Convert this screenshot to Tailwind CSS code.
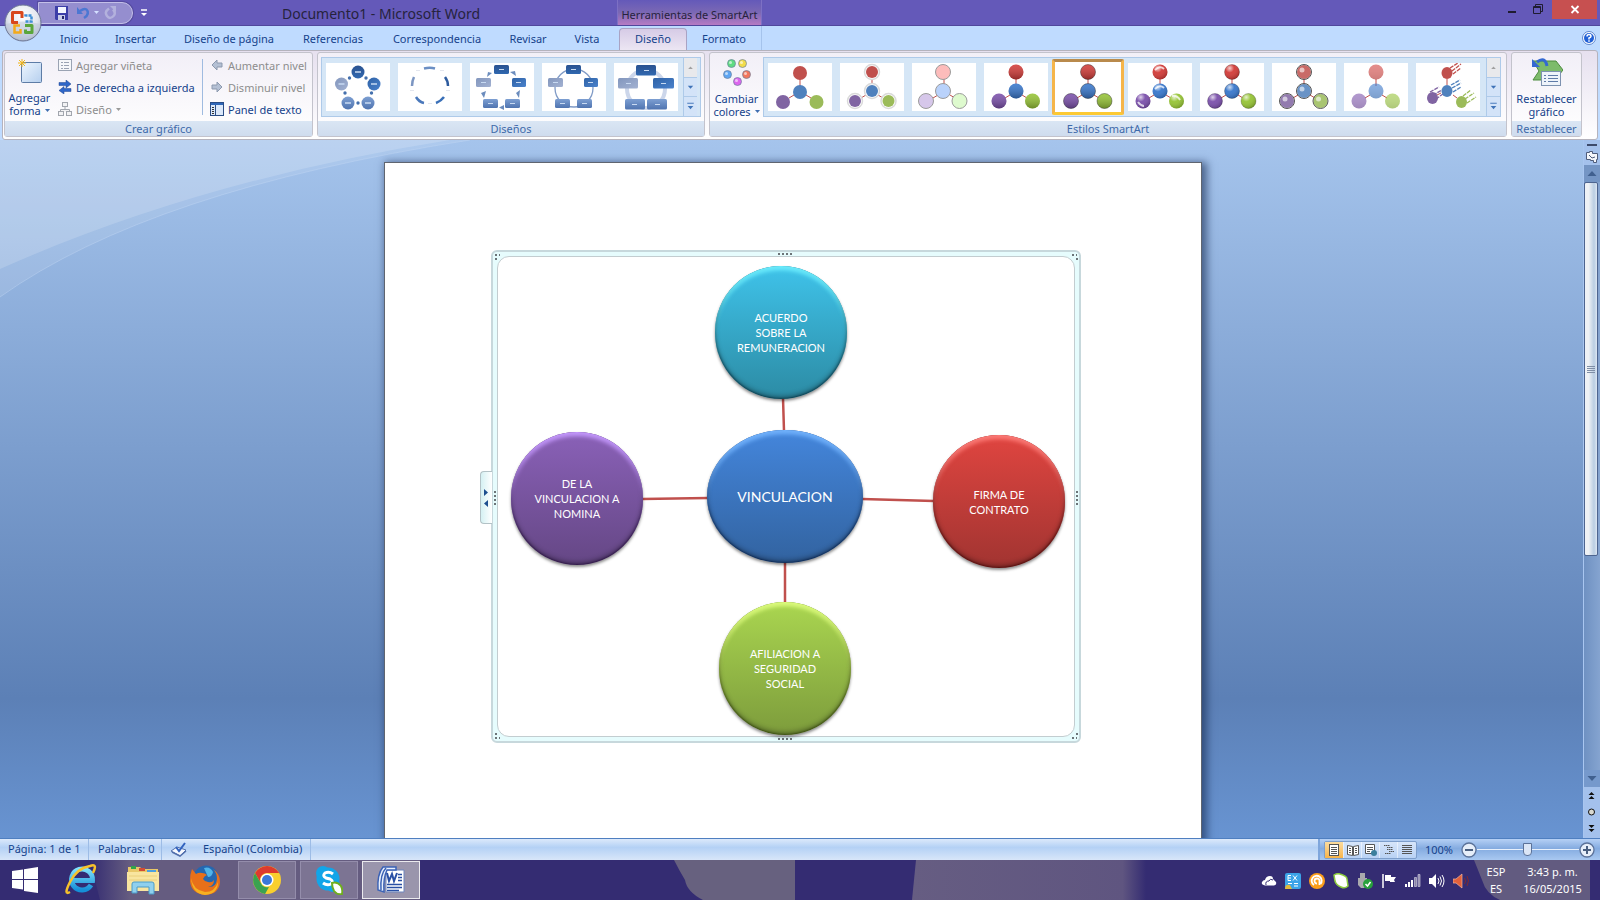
<!DOCTYPE html>
<html lang="es">
<head>
    <meta charset="UTF-8">
    <meta name="viewport" content="width=device-width, initial-scale=1.0">
    <title>Documento1 - Microsoft Word</title>
    <script src="https://cdn.jsdelivr.net/npm/@tailwindcss/browser@4"></script>
</head>
<body class="h-screen flex flex-col overflow-hidden bg-[#bfdbff] font-['Noto_Sans',sans-serif] text-[11px] leading-[13px] text-[#15428b]">

    <!-- Shared gradients and symbols -->
    <svg class="absolute w-0 h-0" aria-hidden="true">
        <defs>
            <linearGradient id="blueDark" x1="0" y1="0" x2="0" y2="1"><stop offset="0" stop-color="#2a5290"/><stop offset="1" stop-color="#3068b0"/></linearGradient>
            <linearGradient id="blueMid" x1="0" y1="0" x2="1" y2="1"><stop offset="0" stop-color="#2f62a6"/><stop offset="1" stop-color="#4a82cc"/></linearGradient>
            <linearGradient id="blueSoft" x1="0" y1="0" x2="0" y2="1"><stop offset="0" stop-color="#7d9fd2"/><stop offset="1" stop-color="#4f74b0"/></linearGradient>
            <linearGradient id="blueGray" x1="0" y1="0" x2="1" y2="1"><stop offset="0" stop-color="#8296bd"/><stop offset="1" stop-color="#a3b2d2"/></linearGradient>
            <linearGradient id="shade" x1="0" y1="0" x2="0" y2="1"><stop offset="0" stop-color="#fff" stop-opacity=".12"/><stop offset="1" stop-color="#000" stop-opacity=".3"/></linearGradient>
            <radialGradient id="gloss" cx=".35" cy=".25" r=".75"><stop offset="0" stop-color="#fff" stop-opacity=".75"/><stop offset=".4" stop-color="#fff" stop-opacity=".05"/><stop offset="1" stop-color="#000" stop-opacity=".2"/></radialGradient>
            <linearGradient id="sheet" x1="0" y1="0" x2="1" y2="1"><stop offset="0" stop-color="#eef6ff"/><stop offset="1" stop-color="#b5cfee"/></linearGradient>
            <radialGradient id="orb" cx=".5" cy=".3" r=".7"><stop offset="0" stop-color="#fff"/><stop offset=".6" stop-color="#e0e5ee"/><stop offset="1" stop-color="#a3aec4"/></radialGradient>
            <linearGradient id="ice" x1="0" y1="0" x2="0" y2="1"><stop offset="0" stop-color="#7fe0fb"/><stop offset="1" stop-color="#158fd8"/></linearGradient>
        </defs>
        <symbol id="joints" viewBox="0 0 64 48"><path d="M32 16v7M26 32l-5 3M38 32l5 3" stroke="#c0504d" fill="none"/></symbol>
        <symbol id="balls" viewBox="0 0 64 48">
            <circle cx="32" cy="10" r="7" fill="#c0504d"/><circle cx="32" cy="29" r="7" fill="#4f81bd"/><circle cx="15" cy="39" r="7" fill="#8064a2"/><circle cx="48.500" cy="39" r="7" fill="#9bbb59"/>
        </symbol>
        <symbol id="vivid" viewBox="0 0 64 48">
            <circle cx="32" cy="9" r="7.500" fill="#d23b38"/><circle cx="32" cy="28" r="7.500" fill="#3877cc"/><circle cx="15" cy="38" r="7.500" fill="#7b50ab"/><circle cx="48.500" cy="38" r="7.500" fill="#96c435"/>
        </symbol>
        <symbol id="over" viewBox="0 0 64 48">
            <circle cx="32" cy="9" r="7.500"/><circle cx="32" cy="28" r="7.500"/><circle cx="15" cy="38" r="7.500"/><circle cx="48.500" cy="38" r="7.500"/>
        </symbol>
        <symbol id="up" viewBox="0 0 14 20"><path d="M4.500 11.500h5L7 9z" fill="#a0a0a0"/></symbol>
        <symbol id="down" viewBox="0 0 14 20"><path d="M4 8.500h6L7 12z" fill="#3f73b8"/></symbol>
        <symbol id="more" viewBox="0 0 14 20"><path d="M3.500 6.500h7" stroke="#3f73b8"/><path d="M4 9.500h6L7 13z" fill="#3f73b8"/></symbol>
        <symbol id="drop" viewBox="0 0 5 3"><path d="M0 0h5L2.500 3z"/></symbol>
    </svg>

    <!-- Title bar -->
    <header class="relative h-[26px] shrink-0 flex items-center bg-[#6459b9] border-b border-[#50479c] text-[#26233d]">
        <button class="absolute left-1 top-1 z-20 size-[38px]" aria-label="Botón de Office">
            <svg viewBox="0 0 38 38" class="size-full">
                <circle cx="19" cy="19" r="18" fill="url(#orb)" stroke="#6d7796"/>
                <path d="M2 20a17 16 0 0 0 34 0q-17-5-34 0z" fill="#bfc9da" opacity=".6"/>
                <g fill="none" stroke-width="2.500">
                    <path d="M14 18.500H8.500V8.500h9.500V14" stroke="#d8471c" stroke-width="3" stroke-linejoin="round"/>
                    <path d="M21.500 17.500h6v-6h-6v2" stroke="#3f8fd6" stroke-dasharray="3 1"/>
                    <path d="M16 21.500H10.500v7h6V25" stroke="#f3a91b"/>
                    <path d="M21 21.500h7v7h-6.500v-3" stroke="#5aa63a" stroke-width="3" stroke-linejoin="round"/>
                </g>
            </svg>
        </button>
        <div class="ml-[38px] w-[95px] h-[22px] pl-4 flex items-center gap-[9px] rounded-r-full bg-[#958ecf] border border-[#c3bfe8] shadow-[0_0_0_1px_#554ba0]">
            <button aria-label="Guardar"><svg class="w-[13px] h-[14px]" viewBox="0 0 13 14"><path d="M0 0h13v14H1l-1-1z" fill="#3d3fa8"/><path d="M3 1h8v6H3z" fill="#f4f6ff"/><path d="M3 9h7v5H3z" fill="#c9cde8"/><path d="M7 10h2v3H7z" fill="#26286e"/></svg></button>
            <button aria-label="Deshacer"><svg class="w-[12px] h-[14px]" viewBox="0 0 12 14"><path d="M3 5q6-4 7.500 0T7 12" fill="none" stroke="#4c77d2" stroke-width="2.500"/><path d="M0 1v7h6z" fill="#4c77d2"/></svg></button>
            <svg class="w-[5px] h-[3px] -mx-1 fill-[#d4e0ff]"><use href="#drop"/></svg>
            <button aria-label="Rehacer" disabled><svg class="w-[13px] h-[14px]" viewBox="0 0 13 14"><path d="M5 2.500Q0 6 3 10t7-.500q2-3-1-6" fill="none" stroke="#b3b1dd" stroke-width="2.500"/><path d="M6 0h6v6z" fill="#b3b1dd"/></svg></button>
        </div>
        <button class="ml-2" aria-label="Personalizar barra"><svg class="w-[6px] h-[8px]" viewBox="0 0 6 8"><path d="M0 1h6" stroke="#fff" stroke-width="1.500"/><path d="M0 4h6L3 7z" fill="#fff"/></svg></button>
        <h1 class="ml-[135px] pt-[2px] text-[14px] leading-5 whitespace-nowrap">Documento1 - Microsoft Word</h1>
        <div class="absolute left-[617px] top-0 w-[145px] h-[25px] flex items-center justify-center pt-[3px] whitespace-nowrap border-x border-[#7d70c4] bg-linear-to-b from-[#6459b9] via-[#7b68b4] to-[#b67bc4]">Herramientas de SmartArt</div>
        <div class="ml-auto mr-[3px] h-full flex items-start">
            <button class="w-5 h-[18px]" aria-label="Minimizar"><svg class="size-full" viewBox="0 0 20 18"><path d="M4 12h8" stroke="#1f1c30" stroke-width="2"/></svg></button>
            <button class="w-7 h-[18px]" aria-label="Restaurar"><svg class="size-full" viewBox="0 0 28 18" fill="none" stroke="#1f1c30"><path d="M9.500 6.500h7v7h-7zM9.500 7.500h7M11.500 6V4.500h7v7H17"/></svg></button>
            <button class="w-[45px] h-[19px] bg-[#c75050]" aria-label="Cerrar"><svg class="size-full" viewBox="0 0 45 19"><path d="M19.500 6l7 7M26.500 6l-7 7" stroke="#fff" stroke-width="1.800"/></svg></button>
        </div>
    </header>

    <!-- Ribbon tabs -->
    <nav class="h-6 shrink-0 flex items-stretch pl-[46px] pr-1 text-center whitespace-nowrap">
        <button class="w-14">Inicio</button>
        <button class="w-[67px]">Insertar</button>
        <button class="w-[120px]">Diseño de página</button>
        <button class="w-[88px]">Referencias</button>
        <button class="w-[120px]">Correspondencia</button>
        <button class="w-[62px]">Revisar</button>
        <button class="w-[56px]">Vista</button>
        <button class="w-[68px] ml-1 mt-[2px] pb-[2px] rounded-t-sm border border-b-0 border-[#a9a3c4] bg-linear-to-b from-[#d6cbe6] to-[#ece6f3]">Diseño</button>
        <button class="w-[75px] border-r border-[#a5c3ec]">Formato</button>
        <button class="ml-auto" aria-label="Ayuda">
            <svg class="size-[14px]" viewBox="0 0 14 14"><circle cx="7" cy="7" r="6.500" fill="#fff" stroke="#5f87cd"/><circle cx="7" cy="7" r="5" fill="#2160d6"/><path d="M5 5.500q0-2 2-2t2 1.700Q9 6.300 7 7v1.500M7 9.300v1.500" fill="none" stroke="#fff" stroke-width="1.500"/></svg>
        </button>
    </nav>

    <!-- Ribbon -->
    <section class="h-[90px] mx-[2px] shrink-0 flex gap-1 p-px pb-[2px] rounded-[3px] border border-[#b5b3bd] bg-linear-to-b from-[#e6e0ef] to-white whitespace-nowrap">
        <div class="w-[309px] shrink-0 flex flex-col rounded-[3px] border border-[#c3c3cc] bg-linear-to-b from-[#f2eff7] to-white">
            <div class="flex-1 min-h-0 flex">
                <button class="w-[49px] flex flex-col items-center pt-[6px]">
                    <svg class="w-[24px] h-[25px] shrink-0 mb-[7px]" viewBox="0 0 24 25"><rect x="3.500" y="3.500" width="20" height="20" rx="1" fill="url(#sheet)" stroke="#5d7ca6"/><path d="M4 0v8M0 4h8M1 1l6 6M7 1L1 7" stroke="#f0b51a"/></svg>
                    <span>Agregar</span>
                    <span class="flex items-center gap-1">forma <svg class="w-[5px] h-[3px] fill-[#3f6eb0]"><use href="#drop"/></svg></span>
                </button>
                <div class="w-[148px] pl-1 pt-px flex flex-col">
                    <button class="h-[22px] shrink-0 flex items-center gap-1 text-[#8d8d8d]" disabled><svg class="size-[14px]" viewBox="0 0 14 14" fill="none" stroke="#9aa3b3"><rect x=".5" y="1.500" width="13" height="11" fill="#f5f7fa"/><path d="M3 4.500h2M3 7.500h2M3 10.500h2M6 4.500h5M6 7.500h5M6 10.500h5"/></svg>Agregar viñeta</button>
                    <button class="h-[22px] shrink-0 flex items-center gap-1"><svg class="size-[14px]" viewBox="0 0 14 14" fill="#2f66c8" stroke="#1f4692" stroke-width=".5"><path d="M1 2.500h7V0l5 4-5 4V5.500H1zM13 8.500H6V6.500L1 10.500l5 3.500v-2.500h7z"/></svg>De derecha a izquierda</button>
                    <button class="h-[22px] shrink-0 flex items-center gap-1 text-[#8d8d8d]" disabled><svg class="size-[14px]" viewBox="0 0 14 14" fill="#f2f2f4" stroke="#a2a6ae"><path d="M7 5v3M2.500 10V7.500h9V10"/><rect x="4.500" y=".5" width="5" height="4"/><rect x=".5" y="9.500" width="5" height="4"/><rect x="8.500" y="9.500" width="5" height="4"/></svg>Diseño <svg class="w-[5px] h-[3px] fill-[#9a9a9a]"><use href="#drop"/></svg></button>
                </div>
                <div class="w-px my-[6px] bg-[#9fbbe0]"></div>
                <div class="pl-[7px] pt-px flex flex-col">
                    <button class="h-[22px] shrink-0 flex items-center gap-1 text-[#8d8d8d]" disabled><svg class="w-[14px] h-[12px]" viewBox="0 0 14 12"><path d="M12 4H7V1L2 6l5 5V8h5z" fill="#b4c0d4" stroke="#8c99ae"/></svg>Aumentar nivel</button>
                    <button class="h-[22px] shrink-0 flex items-center gap-1 text-[#8d8d8d]" disabled><svg class="w-[14px] h-[12px]" viewBox="0 0 14 12"><path d="M2 4h5V1l5 5-5 5V8H2z" fill="#b4c0d4" stroke="#8c99ae"/></svg>Disminuir nivel</button>
                    <button class="h-[22px] shrink-0 flex items-center gap-1"><svg class="size-[14px]" viewBox="0 0 14 14"><rect x=".5" y=".5" width="13" height="13" fill="#dbe8fa" stroke="#2a4d86"/><path d="M1 1h12v2H1z" fill="#2f66b8"/><path d="M5.500 3v10" stroke="#2a4d86"/><path d="M2 5.500h2M2 7.500h2M2 9.500h2M2 11.500h2" stroke="#333"/></svg>Panel de texto</button>
                </div>
            </div>
            <h2 class="h-[15px] shrink-0 pt-px text-center bg-linear-to-b from-[#dae6f4] to-[#cfdcee] text-[#3e6aaa]">Crear gráfico</h2>
        </div>

        <div class="w-[388px] shrink-0 flex flex-col rounded-[3px] border border-[#c3c3cc] bg-linear-to-b from-[#f2eff7] to-white">
            <div class="flex-1 min-h-0 px-[3px] pt-1">
                <div class="h-[60px] flex items-center border border-[#aecae9] bg-[#d5e6f6]">
                    <div class="flex-1 flex gap-2 pl-1">
                        <button class="w-16 h-12 bg-white" aria-label="Ciclo básico">
                            <svg viewBox="0 0 64 48"><circle cx="32" cy="9" r="6.500" fill="url(#blueDark)"/><circle cx="48" cy="21" r="6.500" fill="url(#blueMid)"/><circle cx="42" cy="40" r="6.500" fill="url(#blueSoft)"/><circle cx="22" cy="40" r="6.500" fill="url(#blueSoft)"/><circle cx="15.500" cy="21" r="6.500" fill="url(#blueGray)"/><g fill="#4470ad"><circle cx="40" cy="15" r="1.700"/><circle cx="45.500" cy="30" r="1.700"/><circle cx="32" cy="40" r="1.700"/><circle cx="19" cy="30" r="1.700"/><circle cx="23.500" cy="15" r="1.700"/></g><path d="M29 9h6M45 21h6M39 40h6M19 40h6M12.500 21h6" stroke="#c8daf2" stroke-width="1.500"/></svg>
                        </button>
                        <button class="w-16 h-12 bg-white" aria-label="Ciclo de texto">
                            <svg viewBox="0 0 64 48" fill="none" stroke-width="2.500"><path d="M26 5.500q6-1.500 11 0" stroke="#6b8fc4"/><path d="M47 14q3 4 3 9" stroke="#2d5b9e"/><path d="M46 34q-3 4-8 6" stroke="#3a70b8"/><path d="M26 40q-5-1-8-6" stroke="#4a78bb"/><path d="M14 23q0-5 2-9" stroke="#7c96c2"/><path d="M18 7.500h4M42 7.500h4M48 27.500h4M12 27.500h4M30 40.500h4" stroke="#e3e6ee" stroke-width="1"/></svg>
                        </button>
                        <button class="w-16 h-12 bg-white" aria-label="Ciclo de bloques">
                            <svg viewBox="0 0 64 48"><rect x="24" y="2" width="15" height="9" rx="1.500" fill="url(#blueDark)"/><rect x="42" y="15" width="14" height="9" rx="1.500" fill="url(#blueMid)"/><rect x="35" y="36" width="15" height="9" rx="1.500" fill="url(#blueSoft)"/><rect x="13" y="36" width="15" height="9" rx="1.500" fill="url(#blueSoft)"/><rect x="6" y="15" width="15" height="9" rx="1.500" fill="url(#blueGray)"/><path d="M40 9l6 4-1-5zM50 27l-1 8-3-5zM34 42v5l-5-2.500zM14 35l-3-5 5-2zM17 14l1-5 4 1z" fill="#6b8cbd"/><path d="M29 6.500h5M46 19.500h5M40 40.500h5M18 40.500h5M11 19.500h5" stroke="#c8daf2"/></svg>
                        </button>
                        <button class="w-16 h-12 bg-white" aria-label="Ciclo continuo">
                            <svg viewBox="0 0 64 48"><circle cx="32" cy="25" r="19" fill="none" stroke="#7f9ac6" stroke-width="1.300"/><rect x="24" y="2" width="15" height="9" rx="1.500" fill="url(#blueDark)"/><rect x="42" y="15" width="14" height="9" rx="1.500" fill="url(#blueMid)"/><rect x="35" y="36" width="15" height="9" rx="1.500" fill="url(#blueSoft)"/><rect x="13" y="36" width="15" height="9" rx="1.500" fill="url(#blueSoft)"/><rect x="6" y="15" width="15" height="9" rx="1.500" fill="url(#blueGray)"/><path d="M29 6.500h5M46 19.500h5M40 40.500h5M18 40.500h5M11 19.500h5" stroke="#c8daf2"/></svg>
                        </button>
                        <button class="w-16 h-12 bg-white" aria-label="Ciclo sin dirección">
                            <svg viewBox="0 0 64 48"><circle cx="32" cy="26" r="19" fill="none" stroke="#ccd6ea" stroke-width="4"/><rect x="22" y="2" width="20" height="10.500" rx="1.500" fill="url(#blueDark)"/><rect x="39" y="15" width="21" height="10.500" rx="1.500" fill="url(#blueMid)"/><rect x="33" y="36" width="20" height="10.500" rx="1.500" fill="url(#blueSoft)"/><rect x="11" y="36" width="20" height="10.500" rx="1.500" fill="url(#blueSoft)"/><rect x="4" y="15" width="20" height="10.500" rx="1.500" fill="url(#blueGray)"/><path d="M30 7.500h5M47 20.500h5M41 41.500h5M18 41.500h5M12 20.500h5" stroke="#c8daf2"/></svg>
                        </button>
                    </div>
                    <div class="w-[14px] mr-[3px] h-full flex flex-col border-l border-[#aecae9]">
                        <button class="flex-1 bg-[#e8e9ec]" aria-label="Subir"><svg class="w-full h-[19px]"><use href="#up"/></svg></button>
                        <button class="flex-1 bg-[#d3e3f8] border-y border-[#aecae9]" aria-label="Bajar"><svg class="w-full h-[18px]"><use href="#down"/></svg></button>
                        <button class="flex-1 bg-[#d3e3f8]" aria-label="Más diseños"><svg class="w-full h-[19px]"><use href="#more"/></svg></button>
                    </div>
                </div>
            </div>
            <h2 class="h-[15px] shrink-0 pt-px text-center bg-linear-to-b from-[#dae6f4] to-[#cfdcee] text-[#3e6aaa]">Diseños</h2>
        </div>

        <div class="w-[798px] shrink-0 flex flex-col rounded-[3px] border border-[#c3c3cc] bg-linear-to-b from-[#f2eff7] to-white">
            <div class="flex-1 min-h-0 flex pr-[5px]">
                <button class="w-[53px] flex flex-col items-center pt-[6px]">
                    <svg class="w-7 h-[27px] shrink-0 mb-[6px]" viewBox="0 0 28 27" stroke="#6c7f9c" stroke-width=".7"><circle cx="8.500" cy="4.500" r="4" fill="#5fdc82"/><circle cx="19.500" cy="4.500" r="4" fill="#f2dc4a"/><circle cx="4.500" cy="15.500" r="4" fill="#5ea5f2"/><circle cx="23.500" cy="15.500" r="4" fill="#f2775e"/><circle cx="14.500" cy="22.500" r="4" fill="#dd66ee"/><g fill="#fff" stroke="none" opacity=".6"><circle cx="7.500" cy="3.500" r="1.500"/><circle cx="18.500" cy="3.500" r="1.500"/><circle cx="3.500" cy="14.500" r="1.500"/><circle cx="22.500" cy="14.500" r="1.500"/><circle cx="13.500" cy="21.500" r="1.500"/></g></svg>
                    <span>Cambiar</span>
                    <span class="flex items-center gap-1">colores <svg class="w-[5px] h-[3px] fill-[#3f6eb0]"><use href="#drop"/></svg></span>
                </button>
                <div class="flex-1 h-[60px] mt-1 flex items-center border border-[#aecae9] bg-[#d5e6f6]">
                    <div class="flex-1 flex gap-2 pl-1">
                        <button class="w-16 h-12 bg-white" aria-label="Relleno simple"><svg viewBox="0 0 64 48"><use href="#joints"/><use href="#balls"/></svg></button>
                        <button class="w-16 h-12 bg-white" aria-label="Contorno blanco"><svg viewBox="0 0 64 48"><use href="#joints"/><use href="#over" fill="#fff" stroke="#dadada" stroke-width="1.500"/><g fill="#c0504d"><circle cx="32" cy="9" r="6"/><circle cx="32" cy="28" r="6" fill="#4f81bd"/><circle cx="15" cy="38" r="6" fill="#8064a2"/><circle cx="48.500" cy="38" r="6" fill="#9bbb59"/></g></svg></button>
                        <button class="w-16 h-12 bg-white" aria-label="Efecto sutil"><svg viewBox="0 0 64 48" stroke="#9b9b9b"><use href="#joints"/><circle cx="31" cy="9" r="7.500" fill="#fdbcbb"/><circle cx="31" cy="28" r="7.500" fill="#b9d2fb"/><circle cx="14" cy="38" r="7.500" fill="#d6c7ea"/><circle cx="47.500" cy="38" r="7.500" fill="#deface"/></svg></button>
                        <button class="w-16 h-12 bg-white" aria-label="Efecto moderado"><svg viewBox="0 0 64 48"><use href="#joints"/><use href="#vivid"/><use href="#over" fill="url(#shade)"/></svg></button>
                        <button class="w-[72px] h-[56px] -m-1 flex items-center justify-center bg-white rounded-[2px] border-[3px] border-[#f5b54a] border-b-[#fcc933] border-t-[#b98a4c]" aria-label="Efecto intenso" aria-pressed="true"><svg class="w-16 h-12 shrink-0" viewBox="0 0 64 48"><use href="#joints"/><use href="#vivid"/><use href="#over" fill="url(#shade)" stroke="#333" stroke-opacity=".45"/></svg></button>
                        <button class="w-16 h-12 bg-white" aria-label="Pulido"><svg viewBox="0 0 64 48"><use href="#joints"/><use href="#vivid"/><use href="#over" fill="url(#gloss)"/><path d="M10 39q3 4 6 4M44 33q5-1 8 4M27 7q5-5 9-1M27 26q5-5 9-1" fill="none" stroke="#fff" stroke-width="2" opacity=".75"/></svg></button>
                        <button class="w-16 h-12 bg-white" aria-label="Bisel"><svg viewBox="0 0 64 48"><use href="#joints"/><use href="#vivid"/><use href="#over" fill="url(#gloss)" stroke="#222" stroke-opacity=".25"/></svg></button>
                        <button class="w-16 h-12 bg-white" aria-label="Caricatura"><svg viewBox="0 0 64 48"><use href="#joints"/><use href="#balls" y="-1"/><use href="#over" fill="#fff" fill-opacity=".15" stroke="#555"/><g fill="#fff" opacity=".6"><circle cx="30" cy="7" r="2.500"/><circle cx="30" cy="26" r="2.500"/><circle cx="13" cy="36" r="2.500"/><circle cx="46.500" cy="36" r="2.500"/></g></svg></button>
                        <button class="w-16 h-12 bg-white" aria-label="Polvo"><svg viewBox="0 0 64 48"><use href="#joints"/><use href="#vivid" opacity=".6"/><use href="#over" fill="url(#shade)" opacity=".3"/></svg></button>
                        <button class="w-16 h-12 bg-white" aria-label="Escena de ladrillos"><svg viewBox="0 0 64 48"><g stroke-width="1.300" stroke-dasharray="4 1"><path d="M34 5l8-5M36 8l9-7M37 11l8-6" stroke="#c0504d"/><path d="M35 22l9-5M36 25l9-5M37 29l8-5" stroke="#4f81bd"/><path d="M14 29l9-5M17 32l9-5M20 36l7-5" stroke="#8064a2"/><path d="M47 33l8-6M49 36l9-6M51 40l9-6" stroke="#9bbb59"/></g><path d="M31 16v6M37 32l4 3M25 30l-4 2" stroke="#c0504d"/><ellipse cx="31" cy="10" rx="5.500" ry="6" fill="#c0504d"/><ellipse cx="31" cy="28" rx="5.500" ry="6" fill="#4f81bd"/><ellipse cx="16.500" cy="35" rx="5.500" ry="6" fill="#8064a2"/><ellipse cx="45.500" cy="39" rx="5.500" ry="6" fill="#9bbb59"/></svg></button>
                    </div>
                    <div class="w-[14px] h-full flex flex-col border-l border-[#aecae9]">
                        <button class="flex-1 bg-[#e8e9ec]" aria-label="Subir"><svg class="w-full h-[19px]"><use href="#up"/></svg></button>
                        <button class="flex-1 bg-[#d3e3f8] border-y border-[#aecae9]" aria-label="Bajar"><svg class="w-full h-[18px]"><use href="#down"/></svg></button>
                        <button class="flex-1 bg-[#d3e3f8]" aria-label="Más estilos"><svg class="w-full h-[19px]"><use href="#more"/></svg></button>
                    </div>
                </div>
            </div>
            <h2 class="h-[15px] shrink-0 pt-px text-center bg-linear-to-b from-[#dae6f4] to-[#cfdcee] text-[#3e6aaa]">Estilos SmartArt</h2>
        </div>

        <div class="w-[71px] shrink-0 flex flex-col rounded-[3px] border border-[#c3c3cc] bg-linear-to-b from-[#f2eff7] to-white">
            <button class="flex-1 min-h-0 flex flex-col items-center pt-1">
                <svg class="w-8 h-[30px] shrink-0 mb-[5px]" viewBox="0 0 32 30"><path d="M2 4h23l7 9-8 10H2l6-9z" fill="#7dbb6b" stroke="#4d8b3f"/><path d="M6 5q8-6 10 4" fill="none" stroke="#3569d1" stroke-width="3"/><path d="M1 2v8h8z" fill="#3569d1"/><rect x="10.500" y="14.500" width="19" height="14" fill="#eef3fa" stroke="#7d92b0"/><path d="M13 18.500h2M13 21.500h2M13 24.500h2M17 18.500h10M17 21.500h10M17 24.500h10" stroke="#5f7ba8"/></svg>
                <span>Restablecer</span>
                <span>gráfico</span>
            </button>
            <h2 class="h-[15px] shrink-0 pt-px text-center bg-linear-to-b from-[#dae6f4] to-[#cfdcee] text-[#3e6aaa]">Restablecer</h2>
        </div>
    </section>

    <!-- Document area -->
    <main class="relative flex-1 min-h-0 flex bg-linear-to-b from-[#a5c4ec] from-0% via-[#5c80b6] via-80% to-[#6894d2]">
        <svg class="absolute left-0 top-0 w-[480px] h-[160px]" viewBox="0 0 480 160" fill="#fff">
            <path d="M0 0h470Q150 50 0 157z" opacity=".1"/>
            <path d="M0 0h450Q200 40 0 129z" opacity=".16"/>
            <path d="M470 0Q150 50 0 157" fill="none" stroke="#c5daf5" stroke-opacity=".4"/>
        </svg>
        <div class="relative flex-1 min-w-0 overflow-hidden pl-[3px]">
            <article class="w-[818px] max-w-full h-full mt-[22px] mx-auto pt-[87px] pl-[106px] bg-white border border-[#5f6570] shadow-[3px_2px_8px_2px_rgba(20,40,80,0.6)]">
                <!-- SmartArt frame -->
                <div class="relative w-[590px] h-[493px] p-1 rounded-md border-2 border-[#c7d8dc] bg-[#e6fcfd]">
                    <div class="size-full rounded-xl border border-[#c3cdd0] bg-white"></div>
                    <svg class="absolute -left-[2px] -top-[2px] w-[590px] h-[493px]" viewBox="0 0 590 493" fill="none" stroke="#6c7478" stroke-width="2" stroke-dasharray="2 2">
                        <path d="M287 4h14M287 489h14M4 241v14M586 241v14M4 5h5M4 9h2M581 5h5M585 9h2M4 488h5M4 484h2M581 488h5M585 484h2"/>
                        <path d="M292 148l1 33M151 249l66-1M371 249l72 2M294 312v41" stroke="#c0504d" stroke-width="2.500" stroke-dasharray="none"/>
                    </svg>
                    <button class="absolute -left-[13px] top-[219px] w-[12px] h-[53px] flex items-center rounded-l-sm border border-r-0 border-[#b3c2c6] bg-linear-to-r from-[#d5f1f3] to-white" aria-label="Panel de texto">
                        <svg class="w-[11px] h-5" viewBox="0 0 11 20" fill="#1d4f8f"><path d="M3 1v7l4-3.500zM7 12v7l-4-3.500z"/></svg>
                    </button>
                    <div class="absolute left-[222px] top-[14px] w-[132px] h-[133px] rounded-full flex items-center justify-center text-center font-['Lato',sans-serif] text-[11px] leading-[15px] text-white bg-linear-to-b from-[#3fc3ea] to-[#2c8ba4] shadow-[inset_0_5px_4px_-1px_#6ff0ff,inset_0_-3px_5px_rgba(0,0,0,0.3),inset_0_0_2px_1px_rgba(0,50,70,0.6),0_2px_3px_rgba(0,0,0,0.45)]">ACUERDO<br>SOBRE LA<br>REMUNERACION</div>
                    <div class="absolute left-[18px] top-[180px] w-[132px] h-[133px] rounded-full flex items-center justify-center text-center font-['Lato',sans-serif] text-[11px] leading-[15px] text-white bg-linear-to-b from-[#8a61b8] to-[#654785] shadow-[inset_0_5px_4px_-1px_#c79bff,inset_0_-3px_5px_rgba(0,0,0,0.3),inset_0_0_2px_1px_rgba(40,10,70,0.6),0_2px_3px_rgba(0,0,0,0.45)]">DE LA<br>VINCULACION A<br>NOMINA</div>
                    <div class="absolute left-[214px] top-[178px] w-[156px] h-[133px] rounded-[50%] flex items-center justify-center text-center font-['Lato',sans-serif] text-[14px] leading-[18px] text-white bg-linear-to-b from-[#4486dc] to-[#3263a0] shadow-[inset_0_5px_4px_-1px_#74b5ff,inset_0_-3px_5px_rgba(0,0,0,0.3),inset_0_0_2px_1px_rgba(0,30,80,0.6),0_2px_3px_rgba(0,0,0,0.45)]">VINCULACION</div>
                    <div class="absolute left-[440px] top-[183px] w-[132px] h-[133px] rounded-full flex items-center justify-center text-center font-['Lato',sans-serif] text-[11px] leading-[15px] text-white bg-linear-to-b from-[#e04540] to-[#a13431] shadow-[inset_0_5px_4px_-1px_#ff7e7a,inset_0_-3px_5px_rgba(0,0,0,0.3),inset_0_0_2px_1px_rgba(80,0,0,0.6),0_2px_3px_rgba(0,0,0,0.45)]">FIRMA DE<br>CONTRATO</div>
                    <div class="absolute left-[226px] top-[350px] w-[132px] h-[133px] rounded-full flex items-center justify-center text-center font-['Lato',sans-serif] text-[11px] leading-[15px] text-white bg-linear-to-b from-[#aad650] to-[#7d9c3c] shadow-[inset_0_5px_4px_-1px_#e0ff80,inset_0_-3px_5px_rgba(0,0,0,0.3),inset_0_0_2px_1px_rgba(50,70,0,0.6),0_2px_3px_rgba(0,0,0,0.45)]">AFILIACION A<br>SEGURIDAD<br>SOCIAL</div>
                </div>
            </article>
        </div>

        <!-- Vertical scrollbar -->
        <div class="relative w-[17px] shrink-0 flex flex-col border-l border-[#a9c6f0] bg-[#a4c1ec]">
            <div class="h-[2px] shrink-0 mt-1 mx-[3px] bg-[#3c4a6b]"></div>
            <button class="mt-[3px] h-[16px]" aria-label="Regla"><svg class="w-[15px] h-[14px]" viewBox="0 0 15 14" fill="#f4f6fa" stroke="#4f5c7a"><path d="M2.500 2.500h3v-1h3v2h5v6h-1v3h-3v-2h-3v-1h-4z"/><path d="M5 5l3 3 3-1" fill="none"/></svg></button>
            <button class="h-[17px] bg-[#7495c4]" aria-label="Desplazar arriba"><svg class="size-full" viewBox="0 0 15 17"><path d="M3 11h9L7.500 6z" fill="#40608f"/></svg></button>
            <div class="flex-1 bg-linear-to-r from-[#6f91c2] to-[#85a4d0]">
                <div class="h-[374px] w-[14px] flex items-center justify-center rounded-[2px] border border-[#4d648f] bg-linear-to-r from-[#eef1f5] from-30% via-[#b9cde2] via-75% to-[#dde7f3]">
                    <div class="w-2 h-[7px] bg-[repeating-linear-gradient(to_bottom,#7f8ea6_0_1px,transparent_1px_2px)]"></div>
                </div>
            </div>
            <button class="h-[17px] bg-[#7699cc]" aria-label="Desplazar abajo"><svg class="size-full" viewBox="0 0 15 17"><path d="M3 6h9l-4.500 5z" fill="#40608f"/></svg></button>
            <button class="h-[17px]" aria-label="Página anterior"><svg class="size-full" viewBox="0 0 15 17"><path d="M4 8h6L7 5zM4 12h6L7 9z" fill="#111"/></svg></button>
            <button class="h-[17px]" aria-label="Seleccionar objeto"><svg class="size-full" viewBox="0 0 15 17"><circle cx="7" cy="8" r="3" fill="#d9d9d0" stroke="#111"/></svg></button>
            <button class="h-[17px]" aria-label="Página siguiente"><svg class="size-full" viewBox="0 0 15 17"><path d="M4 4h6L7 7zM4 8h6l-3 3z" fill="#111"/></svg></button>
        </div>
    </main>

    <!-- Status bar -->
    <footer class="h-[22px] shrink-0 flex items-stretch border-t border-[#4f7fc0] bg-linear-to-b from-[#dce9fb] from-0% via-[#b4d1f5] via-40% to-[#d8e6f9] whitespace-nowrap">
        <button class="w-[89px] pl-2 pb-[2px] text-left border-r border-[#9dbce6]">Página: 1 de 1</button>
        <button class="w-[73px] pl-[9px] pb-[2px] text-left border-r border-[#9dbce6]">Palabras: 0</button>
        <button class="pl-2" aria-label="Revisión ortográfica"><svg class="w-[17px] h-[15px]" viewBox="0 0 17 15"><path d="M1 9l6-4 9 3-6 6z" fill="#f5f8ff" stroke="#5370ac"/><path d="M2 10l8 4 6-5" fill="none" stroke="#5370ac" stroke-width="1.500"/><path d="M6 5l3 4 6-8" fill="none" stroke="#3162be" stroke-width="2"/></svg></button>
        <button class="w-[124px] pl-4 pb-[2px] text-left border-r border-[#9dbce6]">Español (Colombia)</button>
        <div class="ml-auto pl-1 pr-[5px] flex items-center border-l-2 border-[#7fa6dc] bg-linear-to-b from-[#b5d0f5] from-0% via-[#84abe0] via-45% to-[#a9c8f1]">
            <div class="h-[18px] flex rounded-[2px] border border-[#7d9ecb] bg-linear-to-b from-[#d6e5fa] to-[#b9d2f4]">
                <button class="w-[18px] flex items-center justify-center bg-linear-to-b from-[#fbdc9e] to-[#f8b447]" aria-label="Diseño de impresión"><svg class="size-3" viewBox="0 0 12 12"><rect x="1.500" y=".5" width="9" height="11" fill="#fff" stroke="#555"/><path d="M3 3.500h6M3 5.500h6M3 7.500h6M3 9.500h6" stroke="#555"/></svg></button>
                <button class="w-[18px] flex items-center justify-center border-l border-white/50" aria-label="Lectura"><svg class="size-3" viewBox="0 0 12 12" fill="#fff" stroke="#555"><path d="M.5 1.500l5 1v9l-5-1zM11.500 1.500l-5 1v9l5-1zM2 4.500h2M2 6.500h2M2 8.500h2M8 4.500h2M8 6.500h2M8 8.500h2"/></svg></button>
                <button class="w-[18px] flex items-center justify-center border-l border-white/50" aria-label="Diseño web"><svg class="size-3" viewBox="0 0 12 12"><path d="M.5.5h9v9h-9z" fill="#fff" stroke="#555"/><path d="M2 3.500h6M2 5.500h6M2 7.500h3" stroke="#555"/><circle cx="9" cy="9" r="3" fill="#3b7f9c"/></svg></button>
                <button class="w-[18px] flex items-center justify-center border-l border-white/50" aria-label="Esquema"><svg class="size-3" viewBox="0 0 12 12"><path d="M1 1.500h6M4 3.500h6M4 5.500h6M6 7.500h5M2 9.500h6" stroke="#555" stroke-dasharray="1.500 .5"/></svg></button>
                <button class="w-[19px] flex items-center justify-center border-l border-white/50" aria-label="Borrador"><svg class="size-3" viewBox="0 0 12 12"><path d="M1 1.500h10M1 3.500h10M1 5.500h10M1 7.500h10M1 9.500h10" stroke="#555"/></svg></button>
            </div>
            <button class="w-[44px] text-center">100%</button>
            <button aria-label="Alejar"><svg class="size-4" viewBox="0 0 16 16"><circle cx="8" cy="8" r="7" fill="#e6eef9" stroke="#5b7299" stroke-width="1.300"/><path d="M4 8h8" stroke="#4a5f80" stroke-width="2"/></svg></button>
            <input type="range" min="0" max="100" value="49" aria-label="Zoom" class="w-[102px] h-4 appearance-none bg-[linear-gradient(#e7f0fc,#e7f0fc)] bg-[length:100%_1px] bg-center bg-no-repeat [&::-webkit-slider-thumb]:appearance-none [&::-webkit-slider-thumb]:w-[9px] [&::-webkit-slider-thumb]:h-[13px] [&::-webkit-slider-thumb]:rounded-b-[4px] [&::-webkit-slider-thumb]:border [&::-webkit-slider-thumb]:border-[#5b7299] [&::-webkit-slider-thumb]:bg-[#dbe6f6]">
            <button aria-label="Acercar"><svg class="size-4" viewBox="0 0 16 16"><circle cx="8" cy="8" r="7" fill="#e6eef9" stroke="#5b7299" stroke-width="1.300"/><path d="M4 8h8M8 4v8" stroke="#4a5f80" stroke-width="2"/></svg></button>
        </div>
    </footer>

    <!-- Windows taskbar -->
    <div class="relative h-10 shrink-0 flex items-stretch bg-[#342c72] text-white">
        <svg class="absolute inset-0 size-full" viewBox="0 0 1600 40" preserveAspectRatio="none">
            <defs>
                <linearGradient id="haze"><stop offset="0" stop-color="#655c80" stop-opacity="0"/><stop offset=".12" stop-color="#655c80"/><stop offset="1" stop-color="#655c80"/></linearGradient>
                <linearGradient id="haze2"><stop offset="0" stop-color="#665d82"/><stop offset=".9" stop-color="#5f5580"/><stop offset="1" stop-color="#5f5580" stop-opacity="0"/></linearGradient>
            </defs>
            <path d="M90 0h330v40H100z" fill="url(#haze)"/>
            <path d="M674 0h121v40h-92q-16-8-18-20-6-10-11-20z" fill="#67617f"/>
            <path d="M916 0h230v40H912z" fill="url(#haze2)"/>
            <path d="M1474 0h116v40h-90q-14-6-18-20z" fill="#625b80"/>
        </svg>
        <div class="relative flex items-center">
            <button class="w-[50px] flex justify-center" aria-label="Inicio de Windows"><svg class="w-[26px] h-[26px]" viewBox="0 0 26 26" fill="#fff"><path d="M0 4l11-1.500V12H0zM12 2.300L26 0v12H12zM0 13h11v9.500L0 21zM12 13h14v13l-14-2z"/></svg></button>
            <button class="w-[62px] flex justify-center" aria-label="Internet Explorer"><svg class="w-8 h-8" viewBox="0 0 32 32" fill="none"><path d="M26 21a10.500 10.500 0 1 1 1.500-4.500H9" stroke="url(#ice)" stroke-width="5"/><path d="M5 28Q-2 32 5 18T25 2q8-3 3 7" stroke="#f6c12c" stroke-width="2.500"/></svg></button>
            <button class="w-[62px] flex justify-center" aria-label="Explorador de archivos"><svg class="w-8 h-8" viewBox="0 0 32 32"><path d="M1 3h12l2 2h16v22H1z" fill="#e9c868"/><path d="M4 2h5v3H4z" fill="#31a54a"/><path d="M12 4h6v3h-6z" fill="#d24c34"/><path d="M20 6h9v3h-9z" fill="#4aa0e0"/><path d="M0 8h32v19H0z" fill="#f8e5a0"/><path d="M2 12h28M2 16h28" stroke="#ead07c"/><path d="M5 29V20q0-2 2-2h18q2 0 2 2v10h-5v-7H10v6z" fill="#8fd0ee" stroke="#4a9cc8"/></svg></button>
            <button class="w-[62px] flex justify-center" aria-label="Firefox"><svg class="w-8 h-8" viewBox="0 0 32 32"><circle cx="17" cy="14" r="12.500" fill="#2567b0"/><path d="M15 4q6-2 9 4-1 5-5 5z" fill="#4fb3e8"/><path d="M3 5l4 5q3-2 6-1 3 0 5 2-3 1-4 4 2 3 5 3 4 1 6-2 0 6-6 7 8 1 9-8 0-6-4-10 7 5 7 13-1 12-14 13Q2 30 1 17 1 10 3 5z" fill="#e8701a"/><path d="M2 14q2 12 14 14 10 0 13-10 0 12-13 13Q3 30 2 14z" fill="#f6b022"/></svg></button>
            <button class="w-[58px] h-[38px] mx-[2px] flex items-center justify-center border border-[#948dab] bg-white/15" aria-label="Chrome"><svg class="w-7 h-7" viewBox="0 0 28 28"><circle cx="14" cy="14" r="14" fill="#f9cf2e"/><path d="M2 7a14 14 0 0 1 24.200 0H14a7 7 0 0 0-6 10.500z" fill="#dd3a2e"/><path d="M2 7l6 10.500A7 7 0 0 0 16 21l-4 6.900A14 14 0 0 1 2 7z" fill="#3ba250"/><circle cx="14" cy="14" r="6.500" fill="#fff"/><circle cx="14" cy="14" r="5" fill="#3b78d8"/></svg></button>
            <button class="w-[58px] h-[38px] mx-[2px] flex items-center justify-center border border-[#948dab] bg-white/15" aria-label="Skype"><svg class="w-7 h-[30px]" viewBox="0 0 28 30"><circle cx="13" cy="14" r="11.500" fill="#12a5e8"/><circle cx="8" cy="8" r="7" fill="#12a5e8"/><circle cx="18" cy="20" r="7" fill="#12a5e8"/><path d="M18 9q-4-3-8-1-3 3 1 5l4 1q4 2 1 5-4 2-8-1" fill="none" stroke="#fff" stroke-width="3"/><path d="M17 18q5-2 9 3 2 4 1 8-5 1-8-3-2-4-2-8z" fill="#fff" stroke="#6fae1f" stroke-width="2"/></svg></button>
            <button class="w-[58px] h-[38px] mx-[2px] flex items-center justify-center border border-white/80 bg-white/35" aria-label="Word"><svg class="w-[30px] h-7" viewBox="0 0 30 28"><path d="M10 4h18v22H10z" fill="#fff" stroke="#6f86bd"/><path d="M2 24Q1 8 7 1h13v3H11q-4 8-3 22z" fill="#e8f0fd" stroke="#3b62b5" stroke-width="1.500"/><path d="M5 24Q4 8 10 2" fill="none" stroke="#3b62b5" stroke-width="1.500"/><path d="M11 7l2 8 3-7 2 7 3-8" fill="none" stroke="#2950a5" stroke-width="2"/><path d="M22 8.500h4M22 11.500h4M22 14.500h4M11 18.500h15M11 21.500h15M11 24.500h12" stroke="#2950a5" stroke-width="1.500"/></svg></button>
        </div>
        <div class="relative ml-auto mr-[18px] flex items-center">
            <div class="flex gap-2 pt-[2px]">
                <svg class="size-4" viewBox="0 0 16 16" fill="#fff"><path d="M4 12.500Q0 12 1 9q1-2 3-2 1-4 5-4 3 0 3 3l3 3q1 3-2 3.500z"/><path d="M5 12q-1-4 3-4 1-3 4-1" fill="none" stroke="#342c72"/></svg>
                <svg class="size-4" viewBox="0 0 16 16"><rect width="16" height="16" rx="2" fill="#3ba3e8"/><path d="M6 2.500H3v5h3M3 5h3M8 2.500l4 5M12 2.500l-4 5M3 10.500h4M9 10.500h4M9 13h4" stroke="#fff" fill="none"/><path d="M0 16q0-5 5-4l2 4z" fill="#e2b93b"/></svg>
                <svg class="size-4" viewBox="0 0 16 16"><circle cx="8" cy="8" r="8" fill="#fb9e1b"/><path d="M10.500 12V8a2.500 2.500 0 1 0-2.500 2.500M5 12A5 5 0 1 1 11.500 11" fill="none" stroke="#fff" stroke-width="1.800"/></svg>
                <svg class="size-4" viewBox="0 0 16 16"><path d="M1 2q3-2 6-1 7 2 7 5l1 7q-3 3-7 1-5-2-6-6z" fill="#fff" stroke="#8ccb3e" stroke-width="1.500"/></svg>
                <svg class="size-4" viewBox="0 0 16 16"><path d="M3 0h5v5H3zM1 5h9v7l-3 3H4l-3-3z" fill="#a9a9ad"/><circle cx="11" cy="11" r="5" fill="#28a13c"/><path d="M8.500 11l2 2 3-4" fill="none" stroke="#fff" stroke-width="1.500"/></svg>
                <svg class="size-4" viewBox="0 0 16 16"><path d="M2 1v14" stroke="#fff" stroke-width="1.500"/><path d="M4 2h6v2h5l-2 3 1 2H9V8H4z" fill="#fff"/></svg>
                <svg class="size-4" viewBox="0 0 16 16" fill="#fff"><path d="M0 11h2v3H0zM3 9h2v5H3zM6 7h2v7H6z"/><path d="M9.500 4.500h2v9h-2zM13 1.500h2v12h-2z" fill="#8a85a8" stroke="#c9c6da" stroke-width=".7"/></svg>
                <svg class="size-4" viewBox="0 0 16 16"><path d="M0 5h3l4-4v14l-4-4H0z" fill="#fff"/><path d="M9 5q2 3 0 6M11 3.500q3 4.500 0 9M13 2q4 6 0 12" fill="none" stroke="#fff"/></svg>
                <svg class="size-4" viewBox="0 0 16 16"><path d="M0 6h3l6-5v14l-6-5H0z" fill="#e2613c" stroke="#f5b49c" stroke-width=".7"/><path d="M11.500 5q2 3 0 6M14 3q3 5 0 10" fill="none" stroke="#7d2b32"/></svg>
            </div>
            <button class="w-[54px] leading-[17px] text-center">ESP<br>ES</button>
            <button class="w-[59px] leading-[17px] text-center whitespace-nowrap">3:43 p. m.<br>16/05/2015</button>
        </div>
    </div>
</body>
</html>
